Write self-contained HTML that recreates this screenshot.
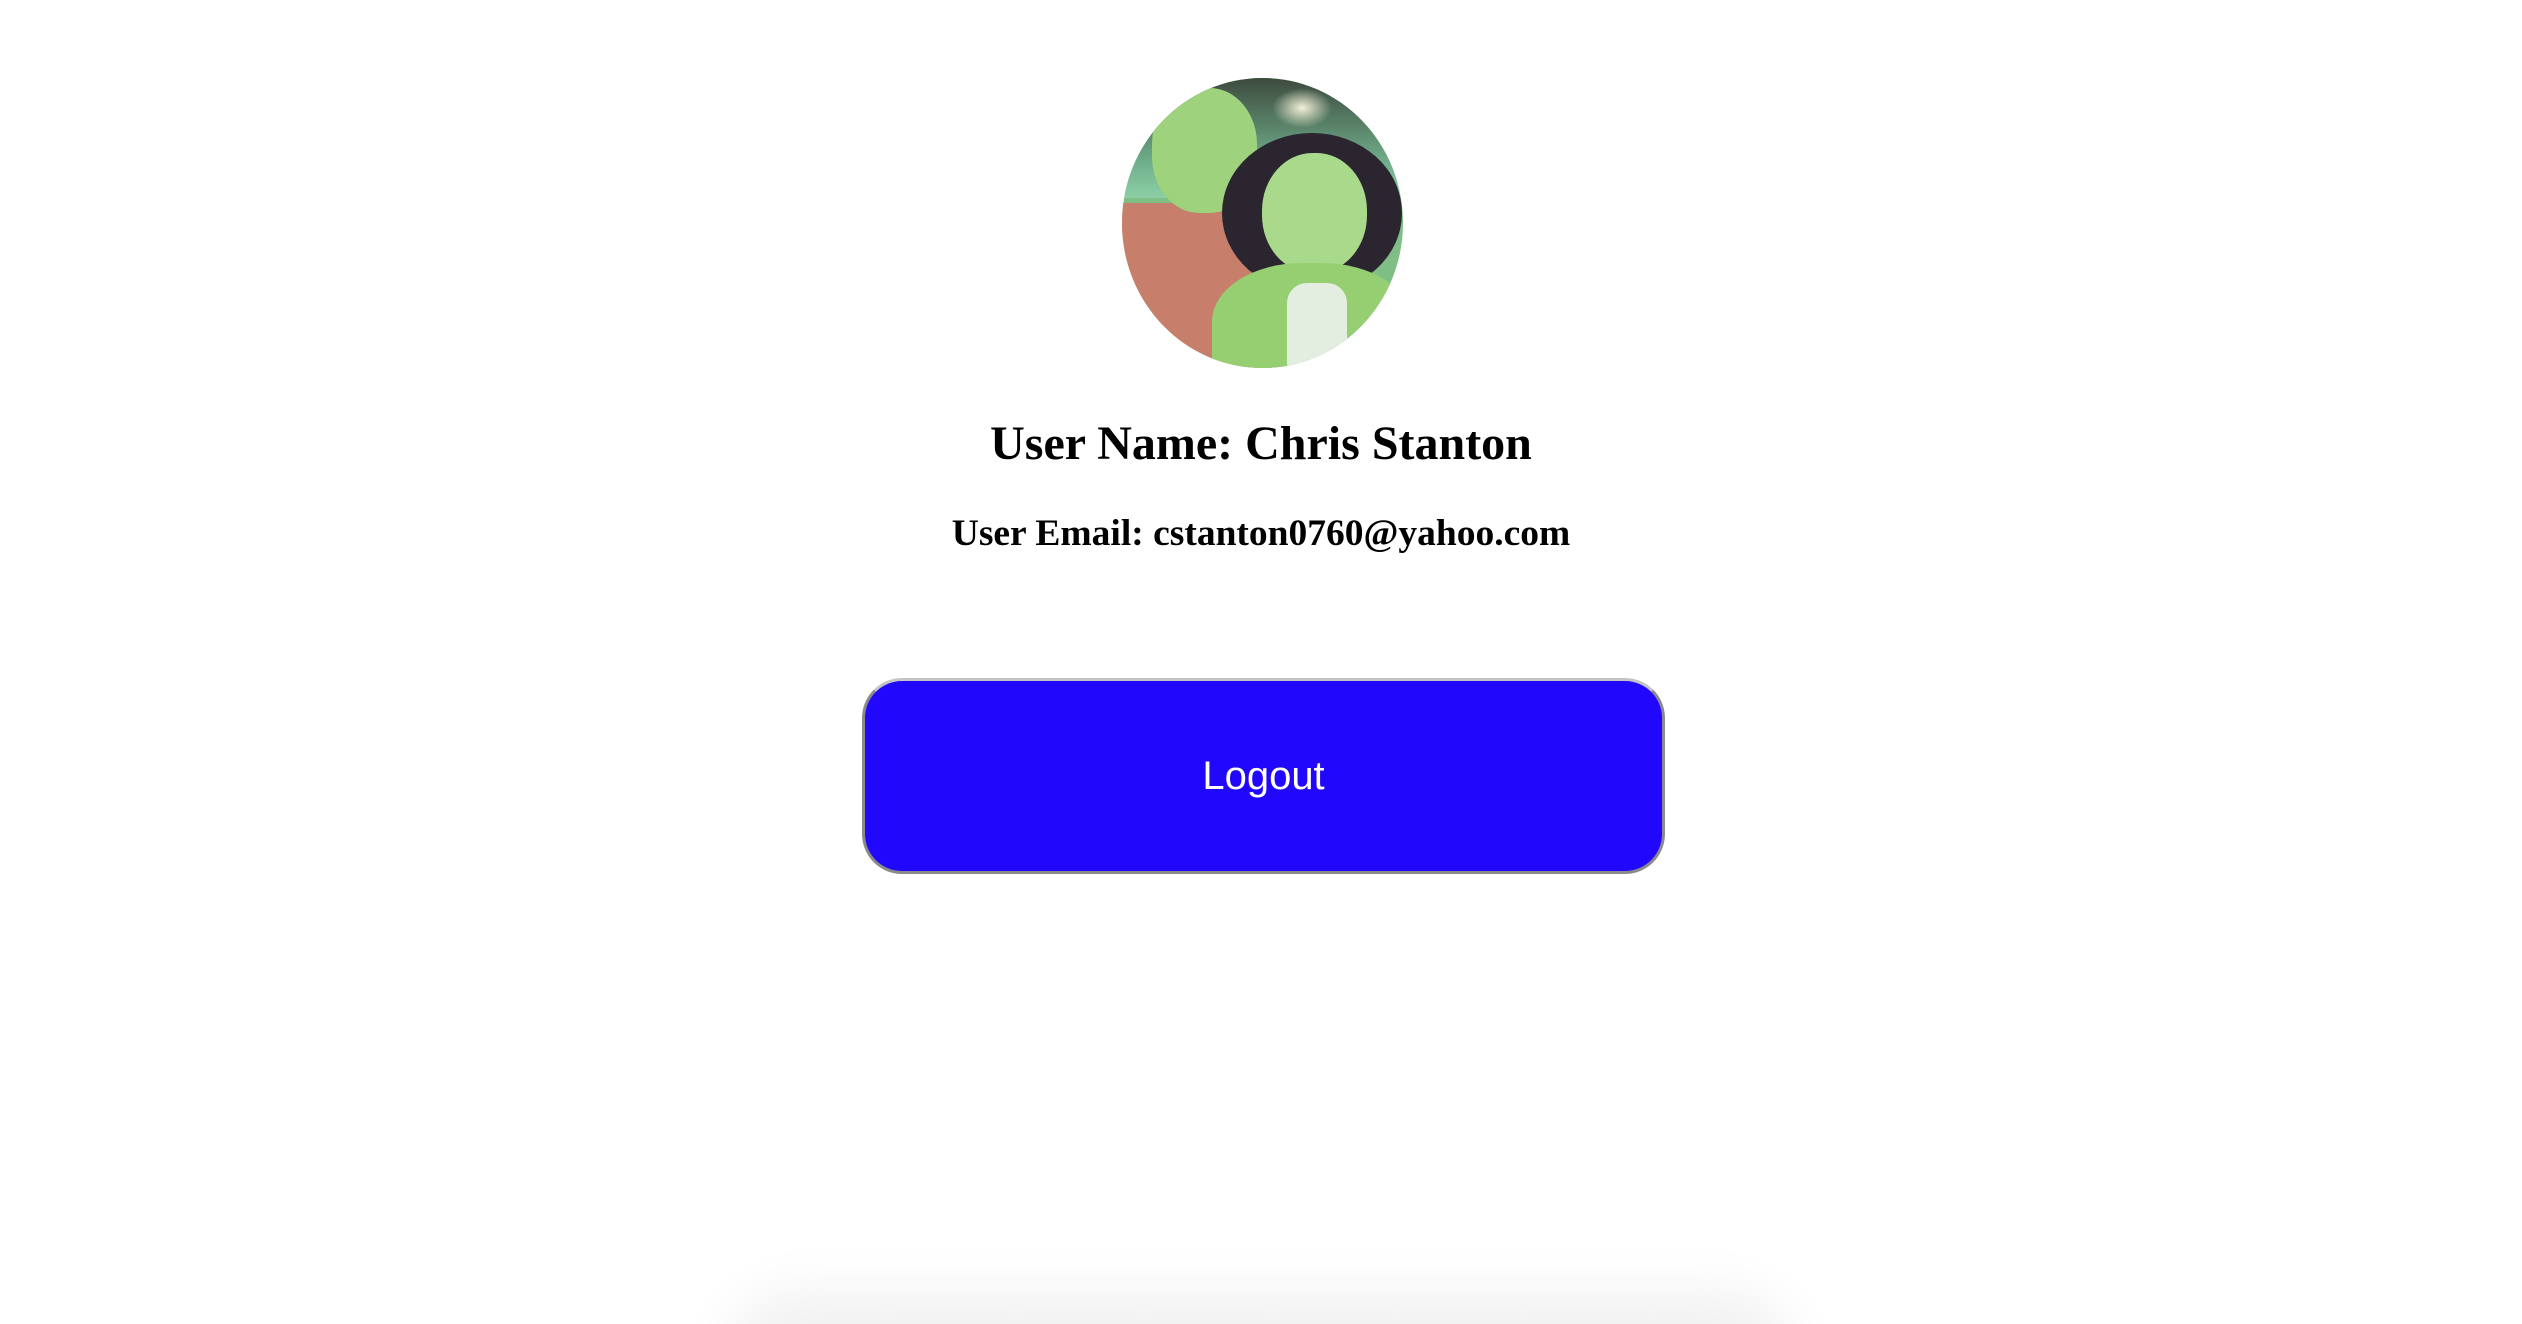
<!DOCTYPE html>
<html><head><style>
html,body{margin:0;padding:0;background:#fff;width:2522px;height:1324px;overflow:hidden;position:relative}
.av{position:absolute;left:1122px;top:78px;width:281px;height:290px;border-radius:50%;overflow:hidden;background:#7fbf86}
.av div{position:absolute}
.t{position:absolute;left:0;width:2522px;text-align:center;font-family:"Liberation Serif",serif;font-weight:bold;color:#000;white-space:nowrap}
.btn{position:absolute;left:862px;top:678px;width:803px;height:196px;box-sizing:border-box;border:3px solid #8a8a8a;border-top-color:#c4c4c4;border-radius:40px;background:#2108fb;color:#fff;font-family:"Liberation Sans",sans-serif;font-size:40px;display:flex;align-items:center;justify-content:center}
.sh{position:absolute;left:760px;top:1324px;width:1000px;height:60px;border-radius:30px;background:#eee;box-shadow:0 0 60px 30px #f0f0f0;}
</style></head><body>
<div class="av">
 <div style="left:0;top:0;width:281px;height:120px;background:linear-gradient(#3d4a3e,#6fae8a 70%,#8ccfa5)"></div>
 <div style="left:150px;top:10px;width:60px;height:40px;background:radial-gradient(#f4f0d8,transparent 70%)"></div>
 <div style="left:0;top:125px;width:170px;height:180px;background:#c77f6c"></div>
 <div style="left:30px;top:10px;width:105px;height:125px;border-radius:45%;background:#9ed27c"></div>
 <div style="left:100px;top:55px;width:180px;height:160px;border-radius:50%;background:#2b2530"></div>
 <div style="left:140px;top:75px;width:105px;height:120px;border-radius:48%;background:#a9d98a"></div>
 <div style="left:90px;top:185px;width:200px;height:130px;border-radius:45% 45% 0 0;background:#96cf72"></div>
 <div style="left:165px;top:205px;width:60px;height:90px;background:#e4eee0;border-radius:20px 20px 0 0"></div>
</div>
<div class="t" style="top:409px;font-size:48px;line-height:70px">User Name: Chris Stanton</div>
<div class="t" style="top:504px;font-size:37.5px;line-height:60px">User Email: cstanton0760@yahoo.com</div>
<div class="btn">Logout</div>
<div class="sh"></div>
</body></html>
